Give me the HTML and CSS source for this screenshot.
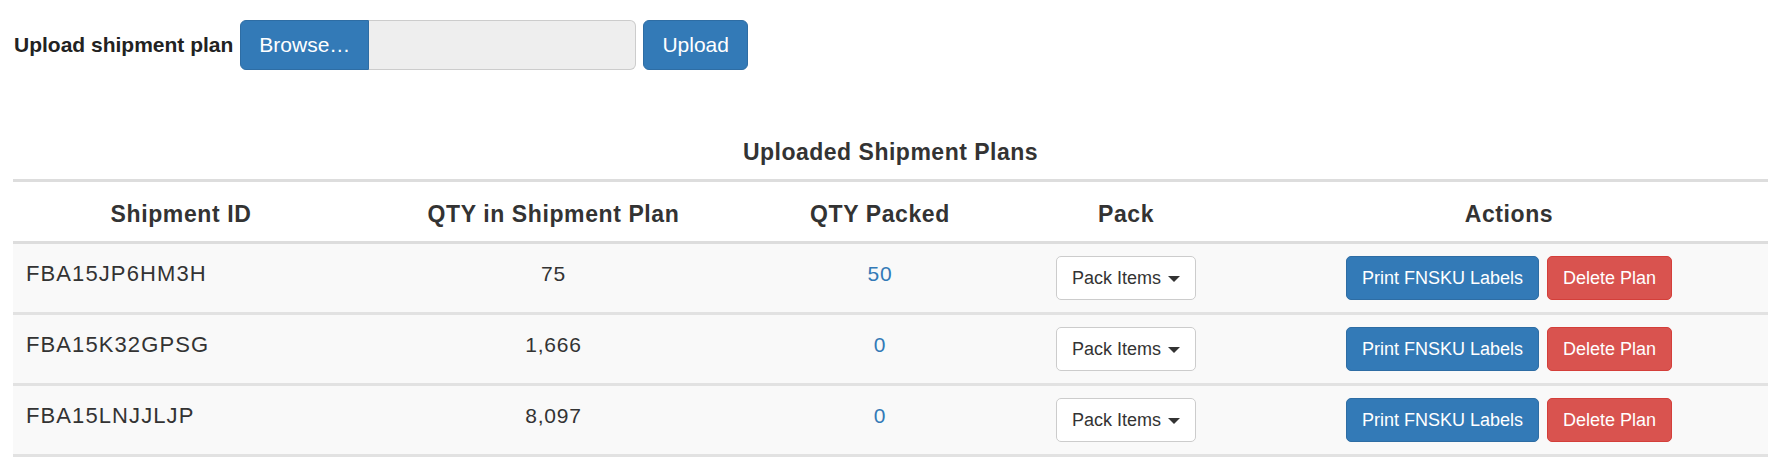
FILE: index.html
```html
<!DOCTYPE html>
<html lang="en">

<head>
    <meta charset="UTF-8">
    <meta name="viewport" content="width=device-width, initial-scale=1.0">
    <title>Shipment Plans</title>
    <link rel="stylesheet" href="styles.css">
</head>

<body>
    <form class="upload-form">
        <label class="upload-label">Upload shipment plan</label>
        <div class="file-group">
            <span class="btn btn-primary btn-browse">Browse&hellip;</span>
            <input type="text" class="file-name" readonly>
        </div>
        <button type="button" class="btn btn-primary btn-upload">Upload</button>
    </form>

    <div class="plans">
        <div class="plans-title">Uploaded Shipment Plans</div>
        <table class="plans-table">
            <colgroup>
                <col class="col-id">
                <col class="col-qty">
                <col class="col-packed">
                <col class="col-pack">
                <col class="col-actions">
            </colgroup>
            <thead>
                <tr>
                    <th>Shipment ID</th>
                    <th>QTY in Shipment Plan</th>
                    <th>QTY Packed</th>
                    <th>Pack</th>
                    <th>Actions</th>
                </tr>
            </thead>
            <tbody>
                <tr>
                    <td class="cell-id">FBA15JP6HM3H</td>
                    <td class="cell-num">75</td>
                    <td class="cell-num"><a href="#">50</a></td>
                    <td class="cell-btn"><button type="button" class="btn btn-sm btn-default">Pack Items <span class="caret"></span></button></td>
                    <td class="cell-btn">
                        <div class="actions">
                            <button type="button" class="btn btn-sm btn-primary">Print FNSKU Labels</button>
                            <button type="button" class="btn btn-sm btn-danger">Delete Plan</button>
                        </div>
                    </td>
                </tr>
                <tr>
                    <td class="cell-id">FBA15K32GPSG</td>
                    <td class="cell-num">1,666</td>
                    <td class="cell-num"><a href="#">0</a></td>
                    <td class="cell-btn"><button type="button" class="btn btn-sm btn-default">Pack Items <span class="caret"></span></button></td>
                    <td class="cell-btn">
                        <div class="actions">
                            <button type="button" class="btn btn-sm btn-primary">Print FNSKU Labels</button>
                            <button type="button" class="btn btn-sm btn-danger">Delete Plan</button>
                        </div>
                    </td>
                </tr>
                <tr>
                    <td class="cell-id">FBA15LNJJLJP</td>
                    <td class="cell-num">8,097</td>
                    <td class="cell-num"><a href="#">0</a></td>
                    <td class="cell-btn"><button type="button" class="btn btn-sm btn-default">Pack Items <span class="caret"></span></button></td>
                    <td class="cell-btn">
                        <div class="actions">
                            <button type="button" class="btn btn-sm btn-primary">Print FNSKU Labels</button>
                            <button type="button" class="btn btn-sm btn-danger">Delete Plan</button>
                        </div>
                    </td>
                </tr>
            </tbody>
        </table>
    </div>
</body>

</html>
```

FILE: styles.css
```css
body {
    font-family: 'Liberation Sans', Arial, sans-serif;
    font-size: 21px;
    line-height: 30px;
    color: #333;
    background: #fff;
    margin: 0;
    padding: 20px 5px 0 13px;
}

/* upload row */
.upload-form {
    display: flex;
    align-items: center;
    margin: 0;
}

.upload-label {
    font-weight: bold;
    color: #222;
    padding-left: 1px;
    margin-right: 7px;
}

.file-group {
    display: flex;
}

.btn {
    display: inline-block;
    font-family: inherit;
    font-size: 21px;
    line-height: 30px;
    padding: 9px 18px;
    border: 1px solid transparent;
    border-radius: 6px;
    cursor: pointer;
    white-space: nowrap;
    box-sizing: border-box;
}

.btn-primary {
    color: #fff;
    background-color: #337ab7;
    border-color: #2e6da4;
}

.btn-danger {
    color: #fff;
    background-color: #d9534f;
    border-color: #d43f3a;
}

.btn-default {
    color: #333;
    background-color: #fff;
    border-color: #ccc;
}

.btn-browse {
    border-radius: 6px 0 0 6px;
}

.file-name {
    width: 267px;
    height: 50px;
    box-sizing: border-box;
    background: #eee;
    border: 1px solid #ccc;
    border-left: none;
    border-radius: 0 6px 6px 0;
    margin: 0;
    padding: 0 12px;
}

.btn-upload {
    margin-left: 7px;
    height: 50px;
}

/* table */
.plans {
    margin-top: 55px;
}

.plans-title {
    text-align: center;
    font-weight: bold;
    font-size: 23px;
    letter-spacing: 0.5px;
    padding: 12px 0;
}

.plans-table {
    width: 100%;
    table-layout: fixed;
    border-collapse: separate;
    border-spacing: 0;
}

.col-id { width: 336px; }
.col-qty { width: 409px; }
.col-packed { width: 244px; }
.col-pack { width: 248px; }

.plans-table th {
    text-align: center;
    font-weight: bold;
    font-size: 23px;
    letter-spacing: 0.6px;
    padding: 17px 12px 12px;
    border-top: 3px solid #ddd;
    border-bottom: 3px solid #ddd;
}

.plans-table td {
    background: #f9f9f9;
    padding: 12px;
    vertical-align: top;
    border-bottom: 3px solid #e2e2e2;
}

.plans-table td.cell-id {
    font-size: 22px;
    padding-left: 13px;
    padding-top: 15px;
    letter-spacing: 1.1px;
}

.plans-table td.cell-num {
    text-align: center;
    padding-top: 15px;
    letter-spacing: 0.8px;
}

.plans-table td.cell-btn {
    text-align: center;
}

.cell-num a {
    color: #337ab7;
    text-decoration: none;
}

.btn-sm {
    font-size: 18px;
    line-height: 27px;
    padding: 7px 15px;
    height: 44px;
    border-radius: 5px;
}

.caret {
    display: inline-block;
    width: 0;
    height: 0;
    margin-left: 2px;
    vertical-align: middle;
    border-top: 6px solid #333;
    border-left: 6px solid transparent;
    border-right: 6px solid transparent;
}

.actions {
    display: flex;
    justify-content: center;
    gap: 8px;
}
```
